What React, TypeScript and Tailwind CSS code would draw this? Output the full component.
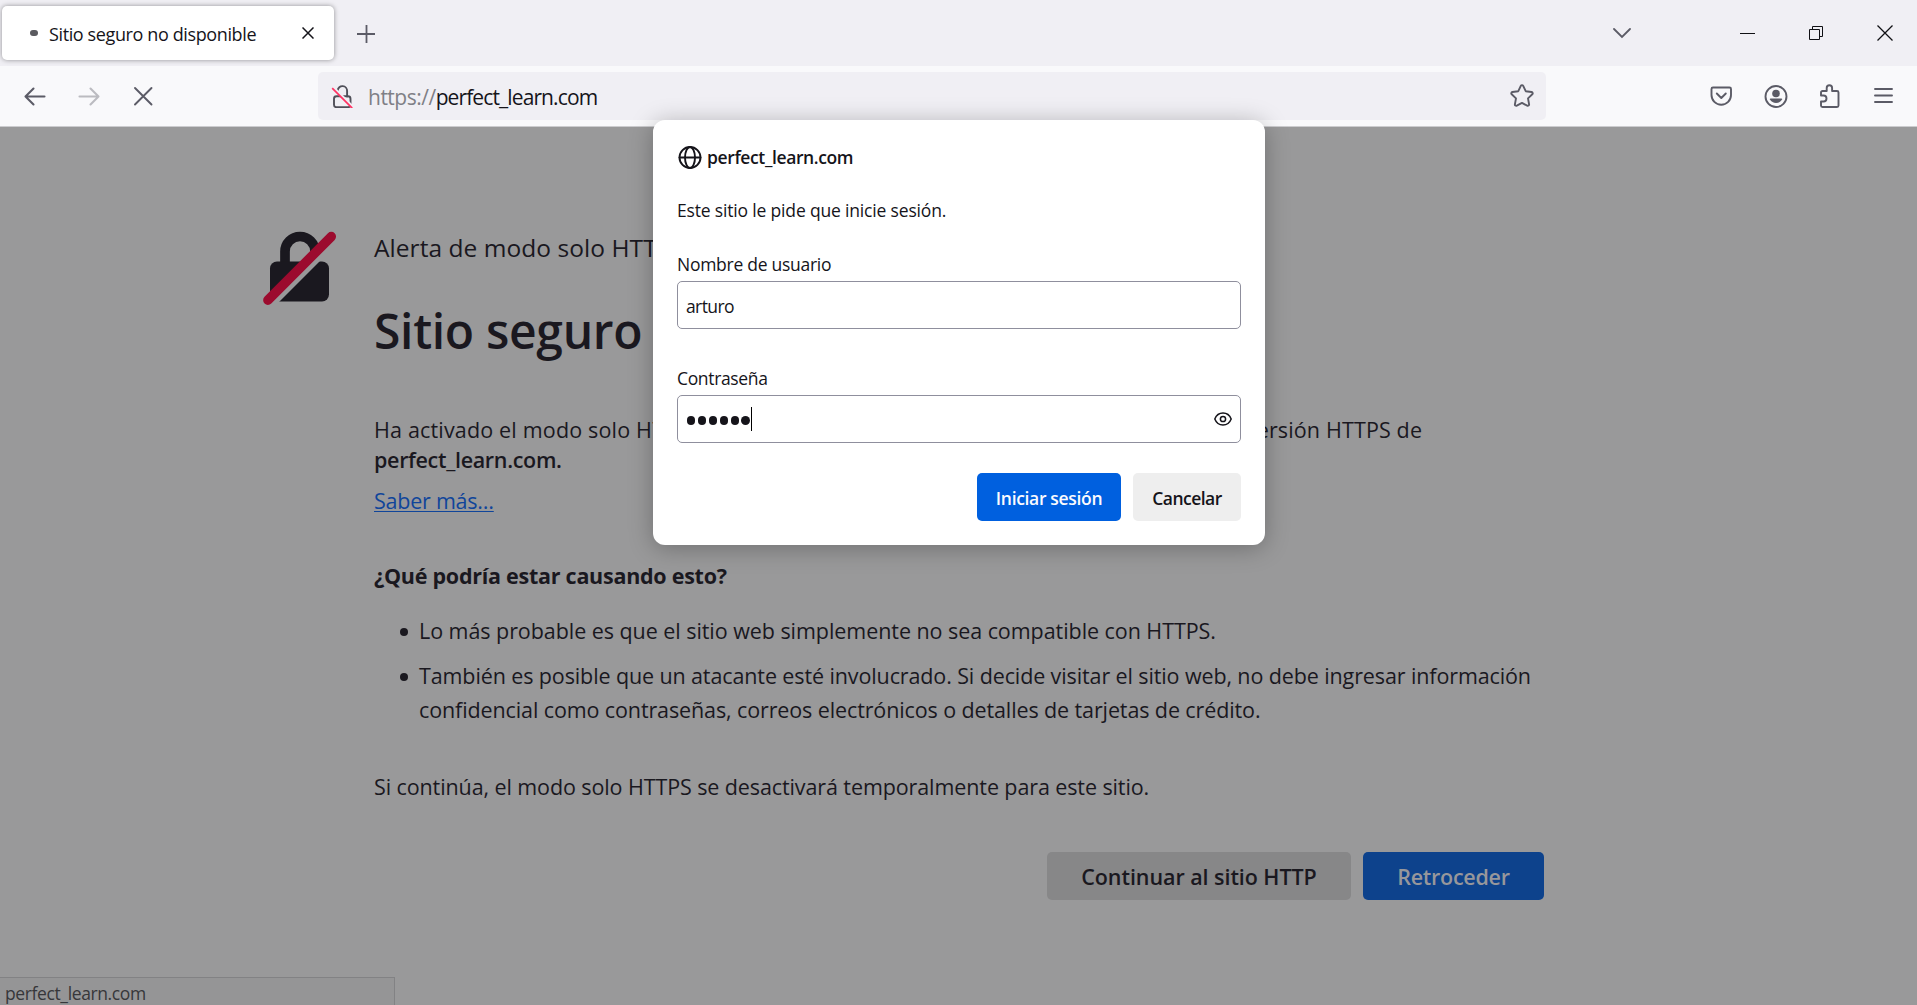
import type { ReactNode } from "react";

function Icon({ children, className = "" }: { children: ReactNode; className?: string }) {
  return (
    <svg
      viewBox="0 0 24 24"
      fill="none"
      stroke="currentColor"
      strokeWidth="1.9"
      strokeLinecap="round"
      strokeLinejoin="round"
      className={"size-6 shrink-0 " + className}
    >
      {children}
    </svg>
  );
}

function TabStrip() {
  return (
    <div className="flex h-[66px] items-center bg-[#f0eff4] text-[#5b5b66]">
      <div className="ml-0.5 flex h-[54px] w-[332px] items-center rounded-[5px] bg-white pr-5 pl-7 shadow-[0_0_5px_rgba(0,0,0,0.4)]">
        <span className="h-1.5 w-2 shrink-0 rounded-full bg-[#5b5b60]" />
        <span className="ml-[11px] pt-px text-[18px] leading-6 tracking-[-0.38px] whitespace-nowrap text-[#15141a]">
          Sitio seguro no disponible
        </span>
        <svg viewBox="0 0 12 12" className="ml-auto size-3 text-[#15141a]" stroke="currentColor" strokeWidth="1.5">
          <path d="M.5.5l11 11M11.5.5l-11 11" />
        </svg>
      </div>
      <svg viewBox="0 0 18 18" className="mt-0.5 ml-[23px] size-[18px]" stroke="currentColor" strokeWidth="1.8">
        <path d="M9.500 0v18M0 9h18" />
      </svg>
      <svg
        viewBox="0 0 20 11"
        fill="none"
        className="ml-auto h-[11px] w-5"
        stroke="currentColor"
        strokeWidth="1.8"
        strokeLinecap="round"
      >
        <path d="M2 1l8 8 8-8" />
      </svg>
      <div className="ml-[108px] flex items-center pr-6 text-[#101014]">
        <span className="h-px w-[15px] bg-current" />
        <svg viewBox="0 0 14 14" fill="none" className="ml-[54px] size-3.5" stroke="currentColor">
          <path d="M.5 3.5h10v10H.5zM3.5 3.5v-3h10v10h-3" />
        </svg>
        <svg viewBox="0 0 16 16" className="ml-[54px] size-4" stroke="currentColor" strokeWidth="1.3">
          <path d="M.5.5l15 15M15.5.5l-15 15" />
        </svg>
      </div>
    </div>
  );
}

function Toolbar() {
  return (
    <div className="flex h-[61px] items-center border-b border-[#cccccf] bg-[#f9f9fb] text-[#5b5b66]">
      <Icon className="ml-[23px]">
        <path strokeWidth="2.1" d="M2.5 12.5h19M10.5 4.500l-8 8 8 8" />
      </Icon>
      <Icon className="ml-[31px] text-[#bbbbc0]">
        <path strokeWidth="2.1" d="M1.500 12.500h19M12.500 4.500l8 8-8 8" />
      </Icon>
      <Icon className="ml-[29px]">
        <path d="M4 4l16.500 16.500M20.500 4L4 20.500" />
      </Icon>
      <div className="ml-[163px] flex h-12 w-[1228px] items-center rounded-[5px] bg-[#f0eff4] pr-3 pl-3">
        <Icon className="text-[#4f4f58]">
          <path d="M7.700 6.500a4.700 4.700 0 0 1 9.400 .7v5.300" />
          <rect x="4" y="12.200" width="16.500" height="11" rx="2.500" />
          <path d="M3.500 3.500l19.500 19.500" stroke="#f0eff4" strokeWidth="2.500" />
          <path d="M2.200 4.200l20 20" stroke="#ff3363" strokeWidth="1.700" strokeLinecap="butt" />
        </Icon>
        <span className="ml-3.5 pt-0.5 text-[21px] leading-7 tracking-[-0.5px] text-[#7f7f86]">https://</span>
        <span className="pt-0.5 text-[21px] leading-7 tracking-[-0.89px] text-[#15141a]">perfect_learn.com</span>
        <svg
          viewBox="0 0 24 24"
          fill="none"
          stroke="currentColor"
          strokeWidth="1.9"
          strokeLinejoin="round"
          className="ml-auto size-6"
        >
          <path d="M10.800 1.900c.5-1 1.900-1 2.400 0l2.500 5.300 5.900.8c1.100.2 1.500 1.500.7 2.300l-4.300 4.100 1.100 5.900c.2 1.100-1 1.900-1.900 1.400L12 18.900l-5.200 2.800c-1 .5-2.100-.3-1.900-1.400L6 14.400l-4.300-4.100C.9 9.500 1.300 8.200 2.400 8l5.900-.8z" />
        </svg>
      </div>
      <div className="ml-[164px] flex items-center gap-[30px]">
        <Icon>
          <path d="M3 3.500h16.500A1.500 1.500 0 0 1 21 5v6a9.500 9.500 0 0 1-19.500 0V5A1.500 1.500 0 0 1 3 3.500z" />
          <path d="M6.800 9.500l4.500 4.500 4.500-4.500" />
        </Icon>
        <Icon>
          <circle cx="12" cy="12.500" r="10.500" />
          <circle cx="12" cy="9.500" r="3.800" fill="currentColor" stroke="none" />
          <path
            d="M6.500 14.500h11c.6 0 .9.600.6 1.100-1.400 2.200-3.600 3.500-6.100 3.500s-4.700-1.300-6.100-3.500c-.3-.500 0-1.100.6-1.100z"
            fill="currentColor"
            stroke="none"
          />
        </Icon>
        <Icon>
          <path d="M3 11.500v-3A1.500 1.500 0 0 1 4.500 7h4.200V4a2.700 2.700 0 0 1 5.400 0v3h4.900a1.500 1.500 0 0 1 1.500 1.500v13a1.500 1.500 0 0 1-1.500 1.500H4.500A1.500 1.500 0 0 1 3 21.500v-4h2.500a3 3 0 0 0 0-6z" />
        </Icon>
        <Icon>
          <path d="M3 5h17M3 11.500h17M3 18h17" />
        </Icon>
      </div>
    </div>
  );
}

function InsecureLock() {
  return (
    <svg viewBox="0 0 74 74" className="h-[74px] w-[74px] shrink-0" fill="none">
      <clipPath id="upper">
        <path d="M0 0h73.700L0 73.700z" />
      </clipPath>
      <clipPath id="lower">
        <path d="M87 0v87H0z" />
      </clipPath>
      <g clipPath="url(#upper)">
        <path d="M22 34V20.500a15 15 0 0 1 30 0V34" stroke="#1a181f" strokeWidth="9.700" />
        <rect x="7" y="30.500" width="59" height="40" rx="7" fill="#1a181f" />
      </g>
      <rect x="7" y="30.500" width="59" height="40" rx="7" fill="#1a181f" clipPath="url(#lower)" />
      <path d="M4.900 69.200L68.300 5.600" stroke="#9c0b2e" strokeWidth="9.500" strokeLinecap="round" />
    </svg>
  );
}

function ErrorPage() {
  return (
    <main className="relative flex flex-1 overflow-hidden bg-[#99999a] pt-[104px] pl-[263px] text-[21.5px] leading-[30px] text-[#1a181f]">
      <InsecureLock />
      <div className="ml-[37px] w-[1170px]">
        <p className="text-[24.5px] leading-[34px] tracking-[0.05px]">Alerta de modo solo HTTPS</p>
        <h1 className="mt-9 text-[48px] leading-[60px] font-semibold tracking-[-0.32px]">
          Sitio seguro no disponible
        </h1>
        <p className="mt-[54px] whitespace-nowrap">
          <span className="tracking-[0.17px]">Ha activado el modo solo </span>
          <span className="tracking-[0.565px]">HTTPS para mejorar la seguridad y no hay disponible una </span>
          <span className="tracking-[0.14px]">versión HTTPS de</span>
          <br />
          <strong className="font-semibold tracking-[-0.32px]">perfect_learn.com.</strong>
        </p>
        <a className="mt-[11px] block w-fit tracking-[-0.24px] text-[#10459a] underline decoration-1 underline-offset-2">
          Saber más…
        </a>
        <h2 className="mt-[45px] font-bold tracking-[-0.26px]">¿Qué podría estar causando esto?</h2>
        <ul className="mt-[23px] flex flex-col gap-[11px] pl-[26px] leading-[34px] whitespace-nowrap">
          <li className="flex">
            <span className="mt-3.5 mr-[11px] size-2 shrink-0 rounded-full bg-current" />
            <span className="tracking-[-0.055px]">
              Lo más probable es que el sitio web simplemente no sea compatible con HTTPS.
            </span>
          </li>
          <li className="flex">
            <span className="mt-3.5 mr-[11px] size-2 shrink-0 rounded-full bg-current" />
            <span className="tracking-[-0.113px]">
              También es posible que un atacante esté involucrado. Si decide visitar el sitio web, no debe ingresar
              información
              <br />
              confidencial como contraseñas, correos electrónicos o detalles de tarjetas de crédito.
            </span>
          </li>
        </ul>
        <p className="mt-[43px] leading-[34px] tracking-[-0.1px]">
          Si continúa, el modo solo HTTPS se desactivará temporalmente para este sitio.
        </p>
        <div className="mt-12 flex justify-end gap-3">
          <button className="h-12 w-[304px] rounded-[5px] bg-[#878788] pt-0.5 font-semibold tracking-[-0.06px]">
            Continuar al sitio HTTP
          </button>
          <button className="h-12 w-[181px] rounded-[5px] bg-[#0d428c] pt-0.5 font-semibold tracking-[-0.26px] text-[#97979b]">
            Retroceder
          </button>
        </div>
      </div>
      <div className="absolute bottom-0 left-0 h-7 w-[395px] border-t border-r border-[#828284] bg-[#959596] pt-[3px] pl-[5px] text-[17.5px] leading-6 tracking-[-0.38px] text-[#37373a]">
        perfect_learn.com
      </div>
    </main>
  );
}

function LoginDialog() {
  return (
    <div className="absolute top-[120px] left-[653px] flex h-[425px] w-[612px] flex-col rounded-xl bg-white p-6 text-[17.5px] leading-6 text-[#15141a] shadow-[0_3px_24px_rgba(0,0,0,0.28)]">
      <div className="flex items-center gap-[5px]">
        <Icon className="ml-px">
          <circle cx="12" cy="12.500" r="10.500" />
          <ellipse cx="12" cy="12.500" rx="5" ry="10.500" />
          <path d="M1.500 12.500h21" />
        </Icon>
        <span className="pt-px font-semibold tracking-[-0.38px]">perfect_learn.com</span>
      </div>
      <p className="mt-[29px] tracking-[-0.17px]">Este sitio le pide que inicie sesión.</p>
      <label className="mt-[30px] tracking-[-0.27px]">Nombre de usuario</label>
      <div className="mt-[5px] flex h-12 items-center rounded-[5px] border border-[#8f8f9d] px-2 pt-0.5 tracking-[-0.6px]">
        arturo
      </div>
      <label className="mt-[37px] tracking-[-0.34px]">Contraseña</label>
      <div className="mt-[5px] flex h-12 items-center rounded-[5px] border border-[#8f8f9d] pr-2 pl-[9px]">
        <div className="mt-[3px] flex gap-[2.7px]">
          {[0, 1, 2, 3, 4, 5].map((i) => (
            <span key={i} className="h-[8.200px] w-[8.200px] rounded-full bg-[#15141a]" />
          ))}
        </div>
        <span className="ml-px h-6 w-px bg-black" />
        <svg
          viewBox="0 0 18 18"
          fill="none"
          stroke="currentColor"
          strokeWidth="1.500"
          className="ml-auto size-[18px]"
        >
          <path d="M.8 9C2.300 5.200 5.200 3 9 3s6.700 2.200 8.200 6c-1.500 3.800-4.400 6-8.200 6S2.300 12.800.8 9z" strokeLinejoin="round" />
          <circle cx="9" cy="9" r="2.600" />
        </svg>
      </div>
      <div className="mt-[30px] flex justify-end gap-3">
        <button className="h-12 w-36 rounded-[5px] bg-[#0060df] pt-0.5 font-semibold tracking-[-0.33px] text-[#fbfbfe]">
          Iniciar sesión
        </button>
        <button className="h-12 w-[108px] rounded-[5px] bg-[#eeeeee] pt-0.5 font-semibold tracking-[-0.52px]">
          Cancelar
        </button>
      </div>
    </div>
  );
}

export default function App() {
  return (
    <div className="relative flex h-[1005px] w-[1917px] flex-col overflow-hidden font-['Open_Sans','Noto_Sans',sans-serif]">
      <TabStrip />
      <Toolbar />
      <ErrorPage />
      <LoginDialog />
    </div>
  );
}
